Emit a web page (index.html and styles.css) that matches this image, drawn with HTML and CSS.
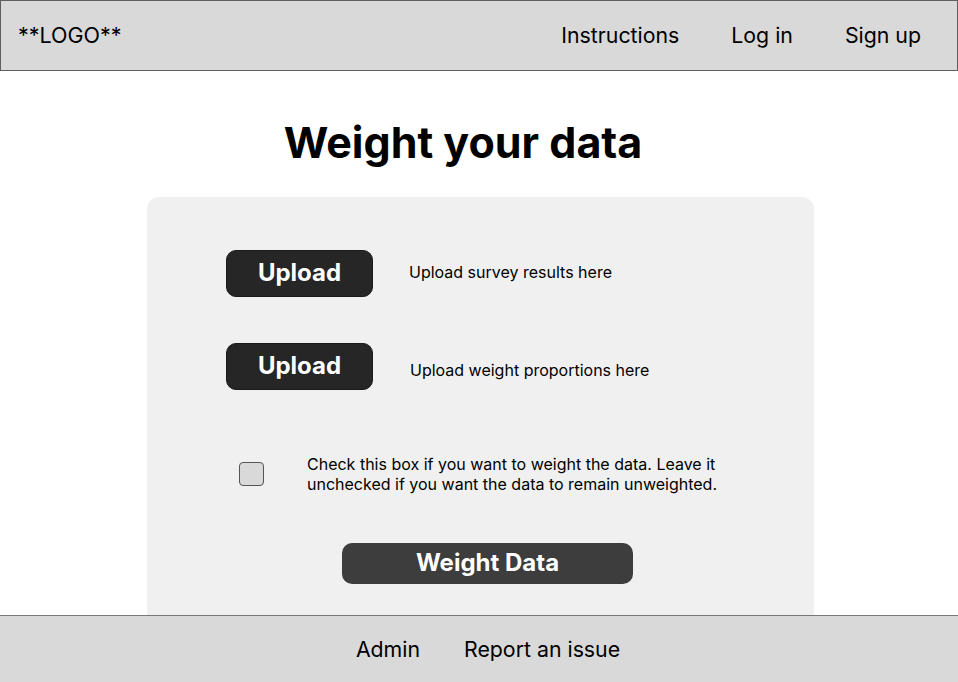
FILE: index.html
```html
<!DOCTYPE html>
<html>
<head>
<meta charset="utf-8">
<link rel="stylesheet" href="styles.css">
</head>
<body>
<header class="topbar">
  <div class="logo">**LOGO**</div>
  <nav class="nav">
    <a class="nav-link">Instructions</a>
    <a class="nav-link">Log in</a>
    <a class="nav-link">Sign up</a>
  </nav>
</header>
<main class="main">
  <h1 class="title">Weight your data</h1>
  <section class="card">
    <div class="row row-1">
      <button class="btn upload">Upload</button>
      <span class="hint">Upload survey results here</span>
    </div>
    <div class="row row-2">
      <button class="btn upload">Upload</button>
      <span class="hint hint-low">Upload weight proportions here</span>
    </div>
    <div class="row check-row">
      <span class="checkbox"></span>
      <p class="check-text">Check this box if you want to weight the data. Leave it<br>unchecked if you want the data to remain unweighted.</p>
    </div>
    <div class="submit-wrap">
      <button class="btn submit">Weight Data</button>
    </div>
  </section>
</main>
<footer class="footer">
  <a class="foot-link">Admin</a>
  <a class="foot-link">Report an issue</a>
</footer>
</body>
</html>
```

FILE: styles.css
```css
* { box-sizing: border-box; }
html, body { margin: 0; padding: 0; }
body {
  width: 958px;
  height: 682px;
  overflow: hidden;
  font-family: Inter, "Liberation Sans", sans-serif;
  color: #000;
  background: #fff;
  display: flex;
  flex-direction: column;
}
.topbar {
  height: 71px;
  background: #d9d9d9;
  border: 1px solid #5f5f5f;
  display: flex;
  align-items: center;
  justify-content: space-between;
  padding: 0 36px 1px 17px;
  flex-shrink: 0;
}
.logo { font-size: 21.5px; }
.nav { display: flex; gap: 52px; }
.nav-link { font-size: 21.3px; }
.main {
  flex: 1;
  display: flex;
  flex-direction: column;
}
.title {
  margin: 46px 0 0 0;
  text-align: center;
  font-size: 43px;
  font-weight: 700;
  line-height: 50px;
  padding-right: 32px;
}
.card {
  margin: 30px 0 0 147px;
  width: 667px;
  flex: 1;
  background: #f0f0f0;
  border-radius: 12px 12px 0 0;
  padding: 53px 0 0 79px;
}
.row { display: flex; align-items: center; }
.row-2 { margin-top: 46px; }
.btn {
  font-family: Inter, "Liberation Sans", sans-serif;
  font-weight: 700;
  color: #fff;
  border: none;
  font-size: 24px;
  padding: 0;
}
.upload {
  width: 147px;
  height: 47px;
  background: #262626;
  border-radius: 10px;
  border: 1px solid #1a1a1a;
  padding-bottom: 3px;
}
.hint { font-size: 16px; margin-left: 36px; padding-bottom: 3px; }
.hint-low { margin-left: 37px; margin-top: 9px; }
.check-row { margin-top: 64px; padding-left: 13px; }
.checkbox {
  width: 25px;
  height: 24px;
  background: #d9d9d9;
  border: 1px solid #555;
  border-radius: 4px;
  flex-shrink: 0;
}
.check-text {
  margin: 0 0 0 43px;
  font-size: 16px;
  line-height: 20px;
}
.submit-wrap { margin-top: 49px; padding-left: 116px; }
.submit {
  width: 291px;
  height: 41px;
  background: #3d3d3d;
  border-radius: 10px;
  padding-bottom: 2px;
}
.footer {
  height: 67px;
  background: #d9d9d9;
  border-top: 1px solid #777;
  display: flex;
  justify-content: center;
  align-items: center;
  gap: 44px;
  padding-left: 18px;
  flex-shrink: 0;
}
.foot-link { font-size: 21.3px; }
```
